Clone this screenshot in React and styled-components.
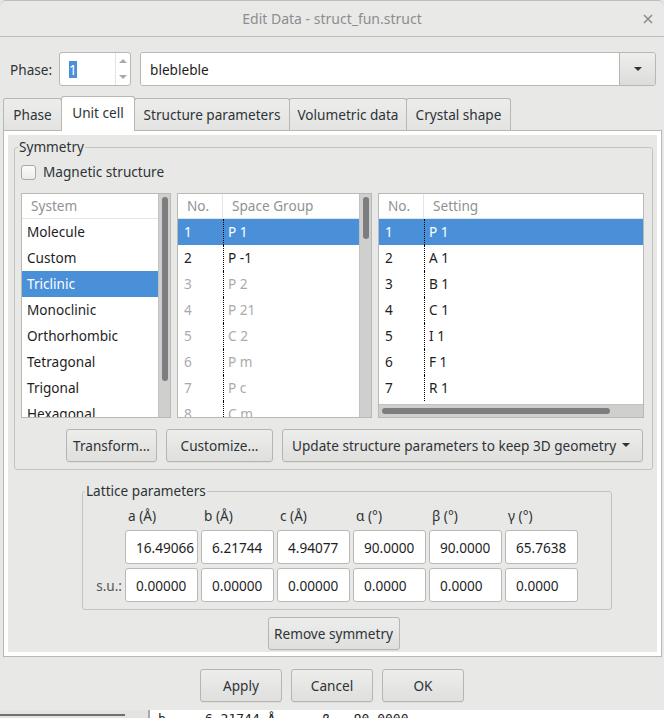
import React from 'react';
import styled, { createGlobalStyle, css } from 'styled-components';

const Global = createGlobalStyle`
  html, body { margin: 0; padding: 0; background: #e8e8e7; }
  * { box-sizing: border-box; }
`;

const Root = styled.div`
  width: 664px;
  height: 718px;
  overflow: hidden;
  display: flex;
  flex-direction: column;
  background: #e8e8e7;
  font-family: "Noto Sans", "Open Sans", sans-serif;
  font-size: 13.6px;
  color: #2e3436;
`;

const TitleBar = styled.header`
  flex: none;
  height: 37px;
  display: grid;
  grid-template-columns: 1fr auto 1fr;
  align-items: center;
  border-top: 1px solid #bdbdba;
  border-bottom: 1px solid #bebebb;
  border-radius: 6px 6px 0 0;
  background: #e9e9e8;
`;

const Title = styled.div`
  grid-column: 2;
  color: #8b8e8f;
  font-size: 14px;
  padding-bottom: 1px;
`;

const Close = styled.div`
  justify-self: end;
  margin-right: 8px;
  width: 16px;
  height: 16px;
  display: flex;
  align-items: center;
  justify-content: center;
`;

const PhaseRow = styled.div`
  flex: none;
  display: flex;
  align-items: center;
  height: 34px;
  margin: 15px 8px 0 10px;
`;

const FieldLabel = styled.span`
  margin-right: 7px;
`;

const SpinBox = styled.div`
  width: 72px;
  height: 34px;
  display: flex;
  border: 1px solid #b7b7b4;
  border-radius: 3px;
  background: #fff;
`;

const SpinValue = styled.div`
  flex: 1;
  display: flex;
  align-items: center;
  padding-left: 9px;
`;

const Selected = styled.span`
  background: #4a90d9;
  color: #fff;
  line-height: 17px;
`;

const SpinButtons = styled.div`
  width: 15px;
  border-left: 1px solid #e3e3e2;
  display: flex;
  flex-direction: column;
`;

const SpinHalf = styled.div`
  flex: 1;
  display: flex;
  align-items: center;
  justify-content: center;
`;

const Arrow = styled.span`
  width: 0;
  height: 0;
  border-left: ${p => p.$size || 4}px solid transparent;
  border-right: ${p => p.$size || 4}px solid transparent;
  ${p => p.$up
    ? css`border-bottom: ${(p.$size || 4)}px solid ${p.$color || '#a9a9a9'};`
    : css`border-top: ${(p.$size || 4)}px solid ${p.$color || '#a9a9a9'};`}
`;

const Combo = styled.div`
  flex: 1;
  margin-left: 9px;
  height: 34px;
  display: flex;
  border: 1px solid #b7b7b4;
  border-radius: 3px;
  overflow: hidden;
`;

const ComboText = styled.div`
  flex: 1;
  background: #fff;
  display: flex;
  align-items: center;
  padding-left: 9px;
  color: #1e1e1e;
`;

const ComboButton = styled.div`
  width: 36px;
  border-left: 1px solid #b7b7b4;
  background: linear-gradient(#eeeeed, #dcdcdb);
  display: flex;
  align-items: center;
  justify-content: center;
`;

const TabBar = styled.div`
  flex: none;
  height: 34px;
  margin-top: 10px;
  padding-left: 3px;
  display: flex;
  align-items: flex-end;
`;

const Tab = styled.div`
  width: ${p => p.$w}px;
  height: 32px;
  margin-left: -1px;
  &:first-child { margin-left: 0; }
  display: flex;
  align-items: center;
  justify-content: center;
  border: 1px solid #b7b7b4;
  border-bottom: none;
  border-radius: 3px 3px 0 0;
  background: linear-gradient(#ededec, #e3e3e2);
  color: #2e3436;
  padding-bottom: 1px;
  ${p => p.$active && css`
    position: relative;
    z-index: 1;
    height: 35px;
    margin-bottom: -1px;
    background: #fff;
    padding-bottom: 4px;
  `}
`;

const Pane = styled.div`
  flex: none;
  margin-left: 3px;
  width: 659px;
  height: 527px;
  border: 1px solid #b7b7b4;
  box-shadow: inset 0 0 0 4px #fff;
  background: #e8e8e7;
  padding: 7px 8px 6px 10px;
  display: flex;
  flex-direction: column;
`;

const Group = styled.fieldset`
  margin: ${p => p.$mt || 0}px 0 0 ${p => p.$ml || 0}px;
  ${p => p.$w && css`width: ${p.$w}px;`}
  min-width: 0;
  border: 1px solid #c3c3c0;
  border-radius: 3px;
  padding: 0 ${p => p.$pr}px 7px ${p => p.$pl}px;
  display: flex;
  flex-direction: column;
`;

const Legend = styled.legend`
  padding: 0 1px 1px;
  margin-left: ${p => p.$ml}px;
  line-height: 17px;
  color: #2e3436;
`;

const CheckRow = styled.label`
  margin-top: 8px;
  height: 16px;
  display: flex;
  align-items: center;
  gap: 7px;
`;

const CheckText = styled.span`
  margin-top: -2px;
`;

const CheckBox = styled.span`
  width: 15px;
  height: 15px;
  border: 1px solid #a9a9a6;
  border-radius: 3px;
  background: linear-gradient(#fbfbfb, #ececeb);
`;

const ListsRow = styled.div`
  margin-top: 13px;
  height: 225px;
  display: flex;
  gap: 6px;
`;

const ListBox = styled.div`
  width: ${p => p.$w}px;
  height: 100%;
  border: 1px solid #b9b9b6;
  background: #fff;
  display: flex;
  flex-direction: ${p => (p.$column ? 'column' : 'row')};
  overflow: hidden;
`;

const Table = styled.div`
  flex: 1;
  min-width: 0;
  min-height: 0;
  overflow: hidden;
  display: flex;
  flex-direction: column;
`;

const HeaderRow = styled.div`
  flex: none;
  height: 25px;
  display: flex;
  border-bottom: 1px solid #e4e4e3;
  color: #8f9393;
`;

const HeaderCell = styled.div`
  display: flex;
  align-items: center;
  padding: 0 0 2px ${p => p.$pl}px;
  ${p => p.$w ? css`width: ${p.$w}px; border-right: 1px solid #e6e6e5;` : css`flex: 1;`}
`;

const Row = styled.div`
  flex: none;
  height: 26px;
  display: flex;
  color: ${p => (p.$disabled ? '#a9abab' : '#1e1e1e')};
  ${p => p.$selected && css`
    background: #4a90d9;
    color: #fff;
  `}
`;

const Cell = styled.div`
  display: flex;
  align-items: center;
  padding: 0 0 2px ${p => p.$pl}px;
  ${p => p.$w ? css`width: ${p.$w}px;` : css`flex: 1;`}
  ${p => p.$dotted && css`border-left: 1px dotted #000;`}
`;

const VScroll = styled.div`
  width: 12px;
  flex: none;
  background: #cfcfcd;
  border-left: 1px solid #c2c2c0;
  padding: 3px 0 0 3px;
`;

const VThumb = styled.div`
  width: 6px;
  border-radius: 3px;
  background: #7b7d7f;
`;

const HScroll = styled.div`
  height: 13px;
  flex: none;
  background: #cfcfcd;
  border-top: 1px solid #c2c2c0;
  padding: 3px 0 0 3px;
`;

const HThumb = styled.div`
  height: 6px;
  border-radius: 3px;
  background: #7b7d7f;
`;

const ButtonRow = styled.div`
  margin-top: 11px;
  display: flex;
  justify-content: flex-end;
  gap: 9px;
  padding-right: ${p => p.$pr || 0}px;
`;

const Button = styled.div`
  width: ${p => p.$w}px;
  height: 33px;
  flex: none;
  display: flex;
  align-items: center;
  justify-content: ${p => (p.$menu ? 'space-between' : 'center')};
  padding: ${p => (p.$menu ? '0 12px 1px 9px' : '0 0 1px')};
  border: 1px solid #b5b5b2;
  border-radius: 3px;
  background: linear-gradient(#ededec, #dfdfde);
  box-shadow: 0 1px 0 rgba(0, 0, 0, 0.04);
  color: #2e3436;
  white-space: nowrap;
  ${p => p.$center && css`align-self: center; margin-top: 7px;`}
`;

const LatticeGrid = styled.div`
  margin-top: 6px;
  display: grid;
  grid-template-columns: 35px repeat(6, 73px);
  grid-template-rows: 20px 34px 34px;
  column-gap: 3px;
  row-gap: 4px;
`;

const ColHead = styled.div`
  display: flex;
  align-items: center;
  padding: 0 0 1px 3px;
  color: #2e3436;
`;

const RowLabel = styled.div`
  display: flex;
  align-items: center;
  justify-content: flex-end;
  color: #555753;
`;

const Field = styled.div`
  display: flex;
  align-items: center;
  padding-left: 10px;
  background: #fff;
  border: 1px solid #b9b9b6;
  border-radius: 3px;
  color: #1e1e1e;
  white-space: nowrap;
  overflow: hidden;
`;

const Footer = styled.div`
  flex: none;
  margin-top: 12px;
  display: flex;
  justify-content: center;
  gap: 9px;
`;

const BehindStrip = styled.div`
  flex: none;
  margin-top: 8px;
  height: 8px;
  display: flex;
  overflow: hidden;
  background: #fff;
`;

const BehindSide = styled.div`
  width: 150px;
  flex: none;
  background: #e3e3e2;
  border-right: 2px solid #a9a9a9;
  padding-top: 4px;
`;

const BehindBar = styled.div`
  width: 125px;
  height: 2px;
  background: #6f6f6f;
`;

const BehindText = styled.div`
  padding-left: 8px;
  margin-top: 1px;
  font-family: "DejaVu Sans Mono", "Liberation Mono", monospace;
  font-size: 13px;
  line-height: 16px;
  white-space: pre;
  color: #222;
`;

const systems = ['Molecule', 'Custom', 'Triclinic', 'Monoclinic', 'Orthorhombic', 'Tetragonal', 'Trigonal', 'Hexagonal'];
const spaceGroups = [['1', 'P 1'], ['2', 'P -1'], ['3', 'P 2'], ['4', 'P 21'], ['5', 'C 2'], ['6', 'P m'], ['7', 'P c'], ['8', 'C m']];
const settings = [['1', 'P 1'], ['2', 'A 1'], ['3', 'B 1'], ['4', 'C 1'], ['5', 'I 1'], ['6', 'F 1'], ['7', 'R 1']];
const heads = ['a (Å)', 'b (Å)', 'c (Å)', 'α (°)', 'β (°)', 'γ (°)'];
const values = ['16.49066', '6.21744', '4.94077', '90.0000', '90.0000', '65.7638'];
const sus = ['0.00000', '0.00000', '0.00000', '0.0000', '0.0000', '0.0000'];
const tabs = [['Phase', 59], ['Unit cell', 74], ['Structure parameters', 156], ['Volumetric data', 118], ['Crystal shape', 105]];

function TwoColList({ w, title, rows, selected, disabledFrom, children, column }) {
  return (
    <ListBox $w={w} $column={column}>
      <Table>
        <HeaderRow>
          <HeaderCell $w={45} $pl={9}>No.</HeaderCell>
          <HeaderCell $pl={9}>{title}</HeaderCell>
        </HeaderRow>
        {rows.map(([n, name], i) => (
          <Row key={n} $selected={i === selected} $disabled={disabledFrom !== undefined && i >= disabledFrom}>
            <Cell $w={45} $pl={6}>{n}</Cell>
            <Cell $pl={4} $dotted>{name}</Cell>
          </Row>
        ))}
      </Table>
      {children}
    </ListBox>
  );
}

export default function App() {
  return (
    <Root>
      <Global />
      <TitleBar>
        <Title>Edit Data - struct_fun.struct</Title>
        <Close>
          <svg width="10" height="10" viewBox="0 0 10 10">
            <path d="M1 1 L9 9 M9 1 L1 9" stroke="#8b8e8f" strokeWidth="1.6" />
          </svg>
        </Close>
      </TitleBar>

      <PhaseRow>
        <FieldLabel>Phase:</FieldLabel>
        <SpinBox>
          <SpinValue><Selected>1</Selected></SpinValue>
          <SpinButtons>
            <SpinHalf><Arrow $up $size={4} /></SpinHalf>
            <SpinHalf><Arrow $size={4} /></SpinHalf>
          </SpinButtons>
        </SpinBox>
        <Combo>
          <ComboText>blebleble</ComboText>
          <ComboButton><Arrow $size={4} $color="#2e3436" /></ComboButton>
        </Combo>
      </PhaseRow>

      <TabBar>
        {tabs.map(([t, w]) => (
          <Tab key={t} $w={w} $active={t === 'Unit cell'}>{t}</Tab>
        ))}
      </TabBar>

      <Pane>
        <Group $pl={6} $pr={8}>
          <Legend $ml={-3}>Symmetry</Legend>
          <CheckRow>
            <CheckBox />
            <CheckText>Magnetic structure</CheckText>
          </CheckRow>
          <ListsRow>
            <ListBox $w={150}>
              <Table>
                <HeaderRow>
                  <HeaderCell $pl={9}>System</HeaderCell>
                </HeaderRow>
                {systems.map((s, i) => (
                  <Row key={s} $selected={i === 2}>
                    <Cell $pl={5}>{s}</Cell>
                  </Row>
                ))}
              </Table>
              <VScroll><VThumb style={{ height: 184 }} /></VScroll>
            </ListBox>
            <TwoColList w={195} title="Space Group" rows={spaceGroups} selected={0} disabledFrom={2}>
              <VScroll><VThumb style={{ height: 42 }} /></VScroll>
            </TwoColList>
            <TwoColList w={266} title="Setting" rows={settings} selected={0} column>
              <HScroll><HThumb style={{ width: 228 }} /></HScroll>
            </TwoColList>
          </ListsRow>
          <ButtonRow $pr={1}>
            <Button $w={91}>Transform...</Button>
            <Button $w={107}>Customize...</Button>
            <Button $w={361} $menu>
              <span>Update structure parameters to keep 3D geometry</span>
              <Arrow $size={4} $color="#2e3436" />
            </Button>
          </ButtonRow>
        </Group>

        <Group $mt={12} $ml={68} $w={530} $pl={4} $pr={33}>
          <Legend $ml={-2}>Lattice parameters</Legend>
          <LatticeGrid>
            <span />
            {heads.map(h => <ColHead key={h}>{h}</ColHead>)}
            <span />
            {values.map((v, i) => <Field key={'v' + i}>{v}</Field>)}
            <RowLabel>s.u.:</RowLabel>
            {sus.map((v, i) => <Field key={'s' + i}>{v}</Field>)}
          </LatticeGrid>
        </Group>

        <Button $w={132} $center>Remove symmetry</Button>
      </Pane>

      <Footer>
        <Button $w={82}>Apply</Button>
        <Button $w={82}>Cancel</Button>
        <Button $w={82}>OK</Button>
      </Footer>

      <BehindStrip>
        <BehindSide><BehindBar /></BehindSide>
        <BehindText>{'b  =  6.21744 Å      β = 90.0000'}</BehindText>
      </BehindStrip>
    </Root>
  );
}
